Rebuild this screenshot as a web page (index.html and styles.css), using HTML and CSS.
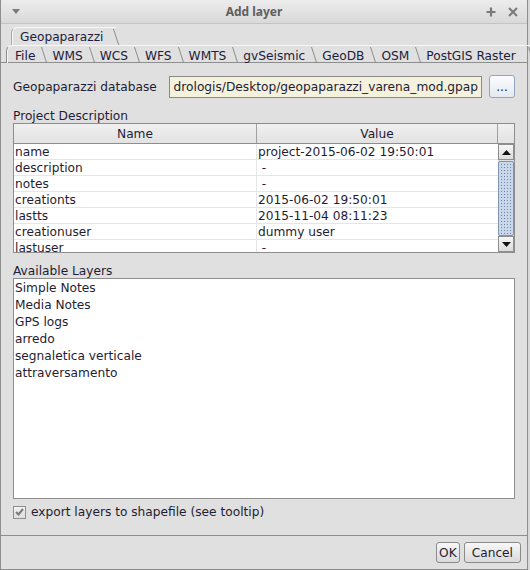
FILE: index.html
```html
<!DOCTYPE html>
<html>
<head>
<meta charset="utf-8">
<link rel="stylesheet" href="styles.css">
</head>
<body>
<div class="window">
  <div class="titlebar">
    <svg class="menu-tri" width="8" height="5" viewBox="0 0 8 5"><path d="M0 0 L8 0 L4 5 Z" fill="#7a7a7a"/></svg>
    <div class="title">Add layer</div>
    <svg class="tb-icon" width="10" height="10" viewBox="0 0 10 10"><path d="M5 0.5 V9.5 M0.5 5 H9.5" stroke="#7a7a7a" stroke-width="2.2"/></svg>
    <svg class="tb-icon" width="10" height="10" viewBox="0 0 10 10"><path d="M1 1 L9 9 M9 1 L1 9" stroke="#7a7a7a" stroke-width="2"/></svg>
  </div>

  <div class="tabstrip">
    <div class="tabrow upper">
      <div class="tab selected">Geopaparazzi</div>
    </div>
    <div class="tabrow lower">
      <div class="tab first">File</div>
      <div class="tab">WMS</div>
      <div class="tab">WCS</div>
      <div class="tab">WFS</div>
      <div class="tab">WMTS</div>
      <div class="tab">gvSeismic</div>
      <div class="tab">GeoDB</div>
      <div class="tab">OSM</div>
      <div class="tab last">PostGIS Raster</div>
    </div>
  </div>

  <div class="panel">
    <div class="dbrow">
      <span class="label">Geopaparazzi database</span>
      <div class="field"><span>drologis/Desktop/geopaparazzi_varena_mod.gpap</span></div>
      <button class="dots">...</button>
    </div>

    <div class="section-label">Project Description</div>
    <div class="table">
      <div class="tmain">
        <div class="thead">
          <div class="th name">Name</div>
          <div class="th value">Value</div>
        </div>
        <div class="tbody">
          <div class="tr"><div class="td name">name</div><div class="td value">project-2015-06-02 19:50:01</div></div>
          <div class="tr"><div class="td name">description</div><div class="td value">&nbsp;-</div></div>
          <div class="tr"><div class="td name">notes</div><div class="td value">&nbsp;-</div></div>
          <div class="tr"><div class="td name">creationts</div><div class="td value">2015-06-02 19:50:01</div></div>
          <div class="tr"><div class="td name">lastts</div><div class="td value">2015-11-04 08:11:23</div></div>
          <div class="tr"><div class="td name">creationuser</div><div class="td value">dummy user</div></div>
          <div class="tr"><div class="td name">lastuser</div><div class="td value">&nbsp;-</div></div>
        </div>
      </div>
      <div class="tside">
        <div class="corner"></div>
        <div class="scrollbar">
          <div class="sbtn"><svg width="9" height="5" viewBox="0 0 9 5"><path d="M0 5 L9 5 L4.5 0 Z" fill="#111"/></svg></div>
          <div class="thumb"></div>
          <div class="track"></div>
          <div class="sbtn"><svg width="9" height="5" viewBox="0 0 9 5"><path d="M0 0 L9 0 L4.5 5 Z" fill="#111"/></svg></div>
        </div>
      </div>
    </div>

    <div class="section-label">Available Layers</div>
    <div class="list">
      <div class="item">Simple Notes</div>
      <div class="item">Media Notes</div>
      <div class="item">GPS logs</div>
      <div class="item">arredo</div>
      <div class="item">segnaletica verticale</div>
      <div class="item">attraversamento</div>
    </div>

    <label class="check">
      <span class="box"><svg width="9" height="8" viewBox="0 0 9 8"><path d="M1 4 L3.5 6.5 L8 1" stroke="#7a7a7a" stroke-width="2" fill="none"/></svg></span>
      <span>export layers to shapefile (see tooltip)</span>
    </label>
  </div>

  <div class="footer">
    <button class="btn ok">OK</button>
    <button class="btn cancel">Cancel</button>
  </div>
</div>
</body>
</html>
```

FILE: styles.css
```css
* { box-sizing: border-box; }
html, body { margin: 0; padding: 0; }
body {
  background: #d8d8d8;
  font-family: "DejaVu Sans", Verdana, sans-serif;
  font-size: 12.2px;
  color: #1f1d33;
}
.window {
  width: 528px;
  height: 570px;
  background: #e0e0e0;
  border-left: 1px solid #8e8e8e;
  border-right: 1px solid #8e8e8e;
  border-bottom: 1px solid #8e8e8e;
  display: flex;
  flex-direction: column;
}
.titlebar {
  height: 24px;
  flex: none;
  display: flex;
  align-items: center;
  padding: 0 9px 0 11px;
  background: linear-gradient(#ececec, #d9d9d9);
  border-bottom: 1px solid #c4c4c4;
}
.title {
  flex: 1;
  text-align: center;
  font-family: "Noto Sans", "DejaVu Sans", sans-serif;
  font-size: 12px;
  font-weight: bold;
  color: #5e5e5e;
  padding-left: 10px;
}
.tb-icon { margin-left: 8px; }
.tb-icon + .tb-icon { margin-left: 12px; }

.tabstrip {
  flex: none;
  height: 39px;
  padding-top: 3px;
  border-bottom: 1px solid #8e8e8e;
  display: flex;
  flex-direction: column;
}
.tabrow { display: flex; height: 18px; }
.tabrow.upper { padding-left: 10px; }
.tabrow.lower { padding-left: 5px; }
.tab {
  position: relative;
  height: 18px;
  line-height: 20px;
  padding: 0 9px 0 8px;
  border-top: 1px solid #f7f7f7;
  color: #221c3c;
  white-space: nowrap;
}
.tab::after {
  content: "";
  position: absolute;
  right: 2px;
  top: 1px;
  bottom: 0;
  border-right: 1px solid #8c8c8c;
  transform: skewX(18deg);
  transform-origin: top;
}
.tab.first {
  border-left: 1px solid #8c8c8c;
  border-top-left-radius: 6px;
  box-shadow: inset 1px 0 0 #f7f7f7;
}
.tab.last { padding-right: 15px; }
.tab.selected {
  height: 19px;
  line-height: 19px;
  padding: 0 13px 0 8px;
  border-left: 1px solid #a8a8a8;
  border-top-left-radius: 6px;
  box-shadow: inset 1px 0 0 #f7f7f7;
}

.panel {
  flex: 1;
  padding: 12px 12px 0 12px;
  display: flex;
  flex-direction: column;
  border-bottom: 1px solid #8e8e8e;
}
.dbrow {
  display: flex;
  align-items: center;
  height: 23px;
}
.label { margin-right: 12px; white-space: nowrap; }
.field {
  flex: 1;
  height: 22px;
  background: #f4f1dc;
  border: 1px solid #8a8a8a;
  display: flex;
  justify-content: flex-end;
  align-items: center;
  overflow: hidden;
  white-space: nowrap;
  padding-right: 3px;
  color: #1f1d33;
}
.dots {
  margin-left: 7px;
  width: 26px;
  height: 23px;
  border: 1px solid #92a6c2;
  border-radius: 3px;
  background: linear-gradient(#fbfcfe, #e4e9f1);
  font: inherit;
  color: #1f1d33;
  padding: 0;
  line-height: 18px;
}
.section-label {
  margin-top: 9px;
  height: 16px;
  line-height: 19px;
}

.table {
  height: 130px;
  border: 1px solid #8e8e8e;
  display: flex;
  background: #fff;
  overflow: hidden;
}
.tmain { flex: 1; display: flex; flex-direction: column; }
.thead {
  display: flex;
  height: 20px;
  flex: none;
  background: linear-gradient(#f0f0f0, #e2e2e2);
  border-bottom: 1px solid #8e8e8e;
}
.th {
  text-align: center;
  line-height: 20px;
}
.th.name { width: 243px; border-right: 1px solid #a0a0a0; }
.th.value { flex: 1; border-right: 1px solid #a0a0a0; }
.tr {
  display: flex;
  height: 16px;
  border-bottom: 1px solid #e6e6e6;
}
.td { line-height: 16px; white-space: nowrap; }
.td.name { width: 243px; padding-left: 1px; border-right: 1px solid #e6e6e6; }
.td.value { flex: 1; padding-left: 1px; }
.tside {
  width: 16px;
  flex: none;
  display: flex;
  flex-direction: column;
  background: #e0e0e0;
}
.corner {
  height: 20px;
  flex: none;
  background: linear-gradient(#f0f0f0, #e2e2e2);
  border-bottom: 1px solid #8e8e8e;
}
.scrollbar {
  flex: 1;
  display: flex;
  flex-direction: column;
}
.sbtn {
  height: 16px;
  flex: none;
  border: 1px solid #8e8e8e;
  background: linear-gradient(#f6f6f6, #dcdcdc);
  display: flex;
  align-items: center;
  justify-content: center;
}
.thumb {
  height: 75px;
  flex: none;
  margin-top: 1px;
  border: 1px solid #7f92ae;
  border-radius: 2px;
  background-color: #c9d7ea;
  background-image: radial-gradient(circle, #6f84a2 0.6px, transparent 0.9px);
  background-size: 3px 3px;
  background-position: 1px 1px;
}
.track { flex: 1; }

.list {
  height: 221px;
  border: 1px solid #8e8e8e;
  background: #fff;
  padding-top: 1px;
}
.item {
  height: 17px;
  line-height: 17px;
  padding-left: 1px;
}
.check {
  display: flex;
  align-items: center;
  margin-top: 6px;
  height: 14px;
}
.box {
  width: 13px;
  height: 13px;
  border: 1px solid #8e8e8e;
  background: linear-gradient(#f2f2f2, #dedede);
  display: flex;
  align-items: center;
  justify-content: center;
  margin-right: 5px;
}
.footer {
  height: 33px;
  flex: none;
  display: flex;
  justify-content: flex-end;
  align-items: center;
  padding: 0 6px 0 0;
}
.btn {
  height: 21px;
  border: 1px solid #8a8a8a;
  border-radius: 3px;
  background: linear-gradient(#f7f7f7, #dadada);
  font: inherit;
  color: #1f1d33;
  margin-left: 4px;
  line-height: 18px;
}
.btn.ok { padding: 0 2px; }
.btn.cancel { padding: 0 7px; }
```
